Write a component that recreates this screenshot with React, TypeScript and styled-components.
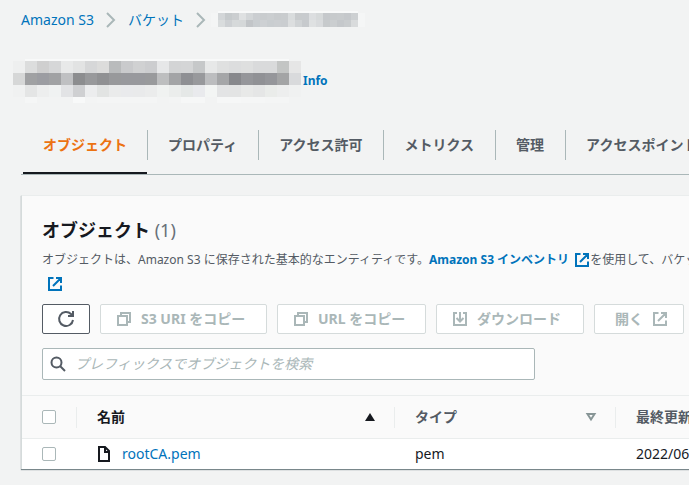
import React from 'react';
import styled, { createGlobalStyle } from 'styled-components';

const GlobalStyle = createGlobalStyle`
  *, *::before, *::after { box-sizing: border-box; }
  html { overflow: hidden; background: #f2f3f3; }
  body {
    margin: 0;
    background: #f2f3f3;
    color: #16191f;
    font-family: "Noto Sans", "Noto Sans CJK JP", sans-serif;
    font-size: 14px;
    line-height: 20px;
  }
  button, input { font: inherit; }
`;

const Page = styled.main`
  padding: 10px 0 16px 21px;
  overflow: hidden;
  white-space: nowrap;
`;

const Link = styled.a<{ $strong?: boolean }>`
  color: #0073bb;
  text-decoration: none;
  font-weight: ${(p) => (p.$strong ? 700 : 400)};
`;

const Breadcrumbs = styled.ol`
  display: flex;
  align-items: center;
  margin: 0;
  padding: 0;
  list-style: none;
  li { display: flex; align-items: center; }
  li > svg { display: block; }
  li:last-child { margin-left: -7px; }
`;

const Separator = styled.svg`
  margin: 0 12px;
`;

const TitleRow = styled.div`
  display: flex;
  align-items: flex-start;
  gap: 2px;
  margin: 29px 0 0 -8px;
  font-size: 12px;
  h1 { margin: 0; line-height: 0; }
  a { margin-top: 12px; }
`;

const Tabs = styled.nav`
  display: flex;
  margin-top: 13px;
  padding-left: 2px;
  border-bottom: 1px solid #aab7b8;
`;

const Tab = styled.button<{ $active?: boolean }>`
  flex: none;
  height: 58px;
  padding: 2px ${(p) => (p.$active ? 20 : 21)}px 0 20px;
  border: 0;
  border-bottom: 2px solid ${(p) => (p.$active ? '#16191f' : 'transparent')};
  background: none;
  color: ${(p) => (p.$active ? '#ec7211' : '#545b64')};
  font-weight: 700;
`;

const TabDivider = styled.span`
  flex: none;
  width: 1px;
  height: 30px;
  margin-top: 14px;
  background: #aab7b8;
`;

const Card = styled.section`
  margin-top: 20px;
  border-left: 1px solid #d5dbdb;
  border-top: 1px solid #eaeded;
  background: #fafafa;
  box-shadow: 0 1px 1px 0 rgba(0, 28, 36, 0.5);
`;

const CardHeader = styled.header`
  padding: 20px 0 15px 20px;
`;

const Heading = styled.h2`
  margin: 0;
  font-size: 18px;
  line-height: 28px;
  span { color: #687078; font-weight: 400; }
`;

const Description = styled.p`
  margin: 4px 0 0;
  color: #545b64;
  font-size: 12px;
  line-height: 24px;
  svg { margin-left: 5px; vertical-align: -4px; }
`;

const Actions = styled.div`
  display: flex;
  gap: 10px;
  margin-top: 8px;
`;

const Button = styled.button<{ $width: number; $inset?: number }>`
  display: flex;
  flex: none;
  align-items: center;
  justify-content: ${(p) => (p.$inset ? 'flex-start' : 'center')};
  gap: 9px;
  width: ${(p) => p.$width}px;
  height: 30px;
  padding: 0 0 0 ${(p) => p.$inset ?? 0}px;
  border: 1px solid #545b64;
  border-radius: 2px;
  background: #fff;
  color: #545b64;
  font-weight: 700;
  &:disabled { border-color: #d5dbdb; color: #aab7b8; }
`;

const Search = styled.label`
  display: flex;
  align-items: center;
  gap: 9px;
  width: 493px;
  height: 32px;
  margin-top: 14px;
  padding: 0 7px;
  border: 1px solid #aab7b8;
  border-radius: 2px;
  background: #fff;
  color: #545b64;
  svg { flex: none; }
`;

const SearchInput = styled.input`
  flex: 1;
  min-width: 0;
  padding: 0;
  border: 0;
  outline: 0;
  background: none;
  color: #16191f;
  &::placeholder { color: #aab7b8; font-style: italic; opacity: 1; }
`;

const Table = styled.table`
  width: 100%;
  table-layout: fixed;
  border-collapse: separate;
  border-spacing: 0;
  text-align: left;
  th { height: 44px; padding: 0; border: solid #eaeded; border-width: 1px 0; }
  td { height: 30px; padding: 0 0 0 20px; background: #fff; }
`;

const Col = styled.col<{ $width?: number }>`
  width: ${(p) => (p.$width ? `${p.$width}px` : 'auto')};
`;

const HeadCell = styled.div<{ $sorted?: boolean; $last?: boolean }>`
  display: flex;
  align-items: center;
  justify-content: space-between;
  height: 21px;
  padding: 0 18px 0 20px;
  border-right: ${(p) => (p.$last ? 0 : 1)}px solid #eaeded;
  color: ${(p) => (p.$sorted ? '#16191f' : '#545b64')};
`;

const Checkbox = styled.input`
  display: block;
  appearance: none;
  width: 14px;
  height: 14px;
  margin: 0;
  border: 1px solid #aab7b8;
  border-radius: 2px;
  background: #fff;
`;

const FileName = styled.div`
  display: flex;
  align-items: center;
  gap: 11px;
`;

const Icon = ({ children }: { children: React.ReactNode }) => (
  <svg width="16" height="16" viewBox="0 0 16 16" fill="none" stroke="currentColor" strokeWidth="2" aria-hidden="true">
    {children}
  </svg>
);

const ExternalIcon = () => (
  <Icon>
    <path d="M6.5 2H2v12h12V9.5M9 2h5v5M6 10l7.5-7.5" />
  </Icon>
);

const CopyIcon = () => (
  <Icon>
    <path d="M2 5h9v9H2zM5 5V2h9v9h-3" />
  </Icon>
);

const Chevron = () => (
  <Separator width="10" height="16" viewBox="0 0 10 16" fill="none" stroke="#aab7b8" strokeWidth="2" aria-hidden="true">
    <path d="M1 1l7 7-7 7" />
  </Separator>
);

const titleTones = [
  'eeefef dcdddd cfcfcf d6d7d8 e8e9e9 e2e3e3 d6d7d8 dcdcdb b9bbbc c9cacc d0d1d2 cccdcf e6e7e8 d3d4d5 d4d5d6 c6c8c9 e7e8e8 dfe0e0 dcddde dedfdf d9dadb d9dadb c3c5c4 e6e6e6',
  'd6d7d7 a0a1a3 9c9da2 a1a2a4 bfc0c2 8c8d8f 98999b 909193 98999b 98999d 98999d 999a9c bdbebf a3a4a6 8e8f93 98999c bcbdbf a5a6a8 87888c 95969a 909195 95969a a3a4a5 d9dadc',
  'f0f1f1 e4e5e5 edeeee f0f2f2 e2e3e5 cfd0d2 ecedee e2e4e3 eaebeb e9eaec e9eaeb ebecec f0f2f1 ebedec e5e8e7 e9eaed f3f5f4 e3e4e5 e3e4e4 e8e9e8 e5e6e6 eaecea edeeee f0f1f1',
  'f2f3f3 f5f6f6 f2f3f3 f2f3f3 f2f3f3 f8f9f9 f3f4f4 f4f5f5 f4f5f5 f4f5f5 f4f5f5 f4f5f5 f2f3f3 f3f4f4 f6f7f7 f6f7f7 f2f3f3 f6f7f7 f6f7f7 f5f6f6 f5f6f6 f4f5f5 f4f5f5 f2f3f3',
];

const crumbTones = [
  'f4f5f5 d3d6d8 c6cacc cbced0 dfe1e2 d3d6d8 cbced1 c9ccce cbced0 c8cbcd c9ccce d9dcdd c8cbcd c8cbce dcdee0 d6d9da c5c8cb c7cacc c8cbcd c5c8cb cdd0d2 f5f6f6',
  'f4f5f5 d9dcdd cdd0d3 d6d9da d5d8d9 c2c5c8 c9cdd0 cdd0d3 c9cdd0 cbced1 cacdd0 dcdedf d0d3d5 c7cacd dfe1e2 d9dbdd c7cacc cbced0 c5c8cb c9ccce d9dbdc f5f6f6',
];

const Mosaic = ({ tones, cell, height, label }: { tones: string[]; cell: number; height: number; label: string }) => {
  const width = tones[0].split(' ').length * cell;
  return (
    <svg width={width} height={height} viewBox={`0 0 ${width} ${height}`} role="img" aria-label={label} shapeRendering="crispEdges">
      {tones.map((row, y) =>
        row.split(' ').map((tone, x) => (
          <rect key={`${x}-${y}`} x={x * cell} y={2 + y * cell} width={cell} height={cell} fill={`#${tone}`} />
        )),
      )}
      <path d={`M${cell} 1H${width - cell}`} stroke="#f8f9f9" strokeWidth="2" />
    </svg>
  );
};

const tabs = ['オブジェクト', 'プロパティ', 'アクセス許可', 'メトリクス', '管理', 'アクセスポイント'];

export default function App() {
  return (
    <>
      <GlobalStyle />
      <Page>
        <Breadcrumbs>
          <li><Link href="#s3">Amazon S3</Link><Chevron /></li>
          <li><Link href="#buckets">バケット</Link><Chevron /></li>
          <li><Mosaic tones={crumbTones} cell={7} height={18} label="bucket" /></li>
        </Breadcrumbs>
        <TitleRow>
          <h1><Mosaic tones={titleTones} cell={12} height={44} label="bucket" /></h1>
          <Link href="#info" $strong>Info</Link>
        </TitleRow>
        <Tabs>
          {tabs.map((tab, i) => (
            <React.Fragment key={tab}>
              {i > 0 && <TabDivider />}
              <Tab type="button" $active={i === 0}>{tab}</Tab>
            </React.Fragment>
          ))}
        </Tabs>
        <Card>
          <CardHeader>
            <Heading>オブジェクト <span>(1)</span></Heading>
            <Description>
              オブジェクトは、Amazon S3 に保存された基本的なエンティティです。
              <Link href="#inventory" $strong>Amazon S3 インベントリ<ExternalIcon /></Link>
              を使用して、バケット
              <br />
              <Link href="#details" aria-label="詳細"><ExternalIcon /></Link>
            </Description>
            <Actions>
              <Button type="button" $width={48} aria-label="更新">
                <svg width="18" height="18" viewBox="0 0 18 18" fill="none" stroke="currentColor" strokeWidth="2" aria-hidden="true">
                  <path d="M16 10a7 7 0 1 1-2-6l1.500 2M16 1v5h-5" />
                </svg>
              </Button>
              <Button type="button" $width={167} $inset={15} disabled><CopyIcon />S3 URI をコピー</Button>
              <Button type="button" $width={149} $inset={15} disabled><CopyIcon />URL をコピー</Button>
              <Button type="button" $width={148} $inset={15} disabled>
                <Icon><path d="M5 2H2v12h12V2h-3M8 1v9M4.500 7L8 10.500 11.500 7" /></Icon>
                ダウンロード
              </Button>
              <Button type="button" $width={90} $inset={20} disabled>開く<ExternalIcon /></Button>
            </Actions>
            <Search>
              <Icon><circle cx="6.500" cy="6.500" r="5" /><path d="M10 10l5 5" /></Icon>
              <SearchInput type="search" aria-label="オブジェクトを検索" placeholder="プレフィックスでオブジェクトを検索" />
            </Search>
          </CardHeader>
          <Table>
            <colgroup><Col $width={55} /><Col $width={318} /><Col $width={221} /><Col /></colgroup>
            <thead>
              <tr>
                <th><HeadCell><Checkbox type="checkbox" aria-label="すべて選択" /></HeadCell></th>
                <th>
                  <HeadCell $sorted>
                    名前
                    <svg width="12" height="10" viewBox="0 0 12 10" aria-hidden="true"><path d="M6 1l5 8H1z" fill="#16191f" /></svg>
                  </HeadCell>
                </th>
                <th>
                  <HeadCell>
                    タイプ
                    <svg width="12" height="10" viewBox="0 0 12 10" aria-hidden="true"><path d="M2.500 2h7L6 7.500z" fill="none" stroke="#879596" strokeWidth="2" /></svg>
                  </HeadCell>
                </th>
                <th><HeadCell $last>最終更新日時</HeadCell></th>
              </tr>
            </thead>
            <tbody>
              <tr>
                <td><Checkbox type="checkbox" aria-label="rootCA.pem" /></td>
                <td>
                  <FileName>
                    <svg width="14" height="16" viewBox="0 0 14 16" fill="none" stroke="#16191f" strokeWidth="2" aria-hidden="true">
                      <path d="M2 1h6l4 4v10H2zM8 1v5h4" />
                    </svg>
                    <Link href="#rootCA.pem">rootCA.pem</Link>
                  </FileName>
                </td>
                <td>pem</td>
                <td>2022/06/</td>
              </tr>
            </tbody>
          </Table>
        </Card>
      </Page>
    </>
  );
}
